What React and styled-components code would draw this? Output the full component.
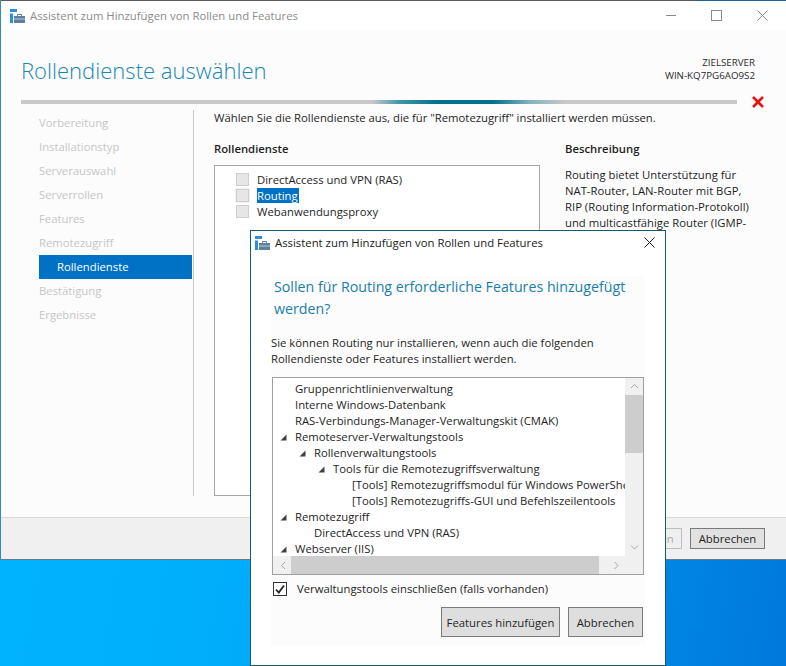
import React from "react";
import styled, { createGlobalStyle } from "styled-components";

const Global = createGlobalStyle`
  html, body { margin: 0; padding: 0; background: #00a8f8; }
  #root { width: 786px; height: 666px; overflow: hidden; }
  * { box-sizing: border-box; }
`;

const font = `"Open Sans", "Noto Sans", "Liberation Sans", sans-serif`;

const Screen = styled.div`
  position: relative;
  width: 786px;
  height: 666px;
  overflow: hidden;
  display: flex;
  flex-direction: column;
  font-family: ${font};
  font-size: 11.3px;
  color: #1e1e1e;
  background: linear-gradient(100deg, #00b6ff 0%, #00aefc 35%, #0094ec 70%, #0078dc 100%);
`;

const Wizard = styled.div`
  width: 786px;
  height: 560px;
  display: flex;
  flex-direction: column;
  background: #fff;
  border-style: solid;
  border-width: 0 0 1px 1px;
  border-color: #000 #000 #6a7a80 #2d8fb5;
`;

const TopEdge = styled.div`
  height: 1px;
  flex: none;
  background: linear-gradient(90deg, #5a5a5a 0, #5a5a5a 694px, #1f5f9e 694px, #1f5f9e 100%);
`;

const TitleBar = styled.div`
  height: 29px;
  flex: none;
  display: flex;
  align-items: center;
  padding-left: 9px;
  background: #fff;
`;

const TitleText = styled.span`
  margin-left: 5px;
  font-size: 11.35px;
  color: ${(p) => (p.$active ? "#1a1a1a" : "#8b8b8b")};
`;

const WinControls = styled.div`
  margin-left: auto;
  display: flex;
  align-items: center;
  padding-right: 18px;
  gap: 35px;
`;

const Body = styled.div`
  flex: 1;
  background: #fcfcfc;
  display: flex;
  flex-direction: column;
  padding-top: 24px;
`;

const Header = styled.div`
  height: 46px;
  display: flex;
  justify-content: space-between;
  padding: 0 31px 0 20px;
`;

const H1 = styled.h1`
  margin: 0;
  font-size: 22.05px;
  line-height: 32px;
  font-weight: 300;
  color: #1a86b4;
`;

const Target = styled.div`
  text-align: right;
  font-size: 9.75px;
  line-height: 13px;
  padding-top: 2px;
  color: #2a2a2a;
`;

const ProgressRow = styled.div`
  display: flex;
  align-items: center;
  height: 4px;
  padding-left: 20px;
`;

const Progress = styled.div`
  width: 716px;
  height: 4px;
  background: linear-gradient(
    90deg,
    #c8c8c8 0%,
    #c8c8c8 49%,
    #3f94a8 53%,
    #04728f 58%,
    #04728f 66%,
    #7fb3bf 71%,
    #c8c8c8 76%,
    #c8c8c8 100%
  );
`;

const ErrorMark = styled.svg`
  margin-left: 15px;
  flex: none;
`;

const Columns = styled.div`
  display: flex;
  padding-top: 6px;
  height: 392px;
`;

const Nav = styled.div`
  width: 193px;
  height: 386px;
  flex: none;
  border-right: 1px solid #c8c8c8;
  padding: 1px 1px 0 38px;
  display: flex;
  flex-direction: column;
`;

const NavItem = styled.div`
  height: 24px;
  line-height: 24px;
  font-size: 11.3px;
  padding-left: ${(p) => (p.$selected ? "18px" : "0")};
  background: ${(p) => (p.$selected ? "#0072c6" : "transparent")};
  color: ${(p) => (p.$selected ? "#fff" : "#c6c6c6")};
`;

const Main = styled.div`
  flex: 1;
  padding-left: 20px;
`;

const Intro = styled.div`
  line-height: 16px;
  height: 31px;
`;

const Panes = styled.div`
  display: flex;
  gap: 25px;
`;

const LeftPane = styled.div`
  width: 326px;
  flex: none;
`;

const PaneTitle = styled.div`
  font-weight: 600;
  line-height: 16px;
  height: ${(p) => (p.$tall ? "24px" : "18px")};
`;

const ServiceBox = styled.div`
  height: 331px;
  border: 1px solid #a6a6a6;
  background: #fff;
  padding: 5px 0 0 21px;
`;

const ServiceRow = styled.div`
  height: 16px;
  display: flex;
  align-items: center;
  gap: 8px;
`;

const Check = styled.span`
  width: 13px;
  height: 13px;
  flex: none;
  background: #e6e6e6;
  border: 1px solid #cfcfcf;
  box-shadow: ${(p) => (p.$hover ? "0 0 0 1px #f0f0f0" : "none")};
`;

const Label = styled.span`
  line-height: 15px;
  padding-right: ${(p) => (p.$selected ? "1px" : "0")};
  background: ${(p) => (p.$selected ? "#0072c6" : "transparent")};
  color: ${(p) => (p.$selected ? "#fff" : "inherit")};
`;

const DescText = styled.p`
  margin: 8px 0 0;
  line-height: 16px;
  white-space: nowrap;
`;

const Footer = styled.div`
  height: 42px;
  margin-top: auto;
  flex: none;
  background: #f0f0f0;
  border-top: 1px solid #d9d9d9;
  display: flex;
  justify-content: flex-end;
  align-items: flex-start;
  gap: 8px;
  padding: 10px 21px 0 0;
`;

const FooterBtn = styled.button`
  width: ${(p) => p.$w}px;
  height: 21px;
  padding: 0;
  font: inherit;
  color: ${(p) => (p.$disabled ? "#a8a8a8" : "#1e1e1e")};
  background: ${(p) => (p.$disabled ? "#efefef" : "#e1e1e1")};
  border: 1px solid ${(p) => (p.$disabled ? "#bdbdbd" : "#7a7a7a")};
`;

const Dialog = styled.div`
  position: absolute;
  left: 250px;
  top: 230px;
  width: 416px;
  height: 436px;
  background: #fff;
  border: 1px solid #155b6e;
  display: flex;
  flex-direction: column;
`;

const DialogTitle = styled.div`
  height: 23px;
  flex: none;
  display: flex;
  align-items: center;
  padding: 0 10px 0 4px;
`;

const DialogClose = styled.svg`
  margin-left: auto;
`;

const DialogPanel = styled.div`
  margin: 22px 20px 0 20px;
  height: 369px;
  background: #fcfcfc;
  display: flex;
  flex-direction: column;
`;

const Question = styled.h2`
  margin: 0;
  padding: 0 0 0 3px;
  font-size: 14.22px;
  line-height: 22px;
  font-weight: 400;
  color: #1a7ea8;
`;

const Explain = styled.div`
  margin-top: 15px;
  line-height: 16px;
  height: 42px;
`;

const ListBox = styled.div`
  margin-left: 1px;
  width: 372px;
  height: 198px;
  flex: none;
  border: 1px solid #a0a0a0;
  background: #fff;
  display: grid;
  grid-template-columns: 1fr 18px;
  grid-template-rows: 1fr 18px;
`;

const TreeView = styled.div`
  overflow: hidden;
  padding-top: 3px;
  white-space: nowrap;
`;

const TreeRow = styled.div`
  height: 16px;
  line-height: 16px;
  display: flex;
  align-items: center;
  padding-left: ${(p) => 3 + p.$level * 19}px;
`;

const Twisty = styled.span`
  width: 19px;
  flex: none;
  display: flex;
  align-items: center;
  padding-left: 4px;
`;

const VBar = styled.div`
  background: #f0f0f0;
  display: flex;
  flex-direction: column;
  justify-content: space-between;
  position: relative;
`;

const ArrowSlot = styled.div`
  height: 17px;
  display: flex;
  align-items: center;
  justify-content: center;
`;

const HBar = styled.div`
  grid-column: 1 / 3;
  background: #f0f0f0;
  position: relative;
  display: flex;
  align-items: center;
  justify-content: space-between;
  padding: 0 23px 0 7px;
`;

const VThumb = styled.div`
  position: absolute;
  left: 0;
  right: 0;
  top: 17px;
  height: 58px;
  background: #cdcdcd;
`;

const HThumb = styled.div`
  position: absolute;
  left: 18px;
  top: 0;
  bottom: 0;
  width: 308px;
  background: #cdcdcd;
`;

const IncludeRow = styled.div`
  margin-top: 6px;
  margin-left: 2px;
  height: 15px;
  display: flex;
  align-items: center;
  gap: 10px;
`;

const CheckedBox = styled.span`
  width: 14px;
  height: 14px;
  flex: none;
  background: #fff;
  border: 1px solid #333;
  display: flex;
  align-items: center;
  justify-content: center;
`;

const DialogActions = styled.div`
  display: flex;
  justify-content: flex-end;
  gap: 8px;
  margin-top: 11px;
  padding-right: 2px;
`;

const DialogBtn = styled.button`
  width: ${(p) => p.$w}px;
  height: 30px;
  padding: 0;
  font: inherit;
  color: #1e1e1e;
  background: #dedede;
  border: 1px solid #7a7a7a;
`;

const Desktop = styled.div`
  flex: 1;
`;

const AppIcon = () => (
  <svg width="15" height="14" viewBox="0 0 15 14">
    <rect x="0" y="0" width="7" height="3" fill="#2b90dc" />
    <rect x="0" y="4.5" width="3" height="9.5" fill="#2b90dc" />
    <rect x="4" y="7" width="11" height="7" fill="#5f7f9f" />
    <rect x="4" y="9.5" width="11" height="1" fill="#b5c6d6" />
    <path d="M7.5 7V5.5h4V7" fill="none" stroke="#5f7f9f" strokeWidth="1" />
  </svg>
);

const Tri = () => (
  <svg width="7" height="7" viewBox="0 0 7 7">
    <path d="M6.5 0.5V6.5H0.5Z" fill="#404040" />
  </svg>
);

const Chevron = ({ d }) => {
  const paths = {
    up: "M1 5L4.5 1.5L8 5",
    down: "M1 1.5L4.5 5L8 1.5",
  };
  const h = {
    left: "M5 1L1.5 4.5L5 8",
    right: "M1.5 1L5 4.5L1.5 8",
  };
  if (paths[d]) {
    return (
      <svg width="9" height="7" viewBox="0 0 9 7">
        <path d={paths[d]} fill="none" stroke="#a6a6a6" strokeWidth="1" />
      </svg>
    );
  }
  return (
    <svg width="7" height="9" viewBox="0 0 7 9">
      <path d={h[d]} fill="none" stroke="#a6a6a6" strokeWidth="1" />
    </svg>
  );
};

const CrossIcon = ({ c, size = 11 }) => (
  <svg width={size} height={size} viewBox="0 0 11 11">
    <path d="M0.5 0.5L10.5 10.5M10.5 0.5L0.5 10.5" stroke={c} strokeWidth="1" fill="none" />
  </svg>
);

const tree = [
  [0, false, "Gruppenrichtlinienverwaltung"],
  [0, false, "Interne Windows-Datenbank"],
  [0, false, "RAS-Verbindungs-Manager-Verwaltungskit (CMAK)"],
  [0, true, "Remoteserver-Verwaltungstools"],
  [1, true, "Rollenverwaltungstools"],
  [2, true, "Tools für die Remotezugriffsverwaltung"],
  [3, false, "[Tools] Remotezugriffsmodul für Windows PowerShell"],
  [3, false, "[Tools] Remotezugriffs-GUI und Befehlszeilentools"],
  [0, true, "Remotezugriff"],
  [1, false, "DirectAccess und VPN (RAS)"],
  [0, true, "Webserver (IIS)"],
];

const steps = [
  "Vorbereitung",
  "Installationstyp",
  "Serverauswahl",
  "Serverrollen",
  "Features",
  "Remotezugriff",
  "Rollendienste",
  "Bestätigung",
  "Ergebnisse",
];

export default function App() {
  return (
    <Screen>
      <Global />
      <Wizard>
        <TopEdge />
        <TitleBar>
          <AppIcon />
          <TitleText>Assistent zum Hinzufügen von Rollen und Features</TitleText>
          <WinControls>
            <svg width="10" height="1" viewBox="0 0 10 1"><rect width="10" height="1" fill="#8a8a8a" /></svg>
            <svg width="11" height="11" viewBox="0 0 11 11"><rect x="0.5" y="0.5" width="10" height="10" fill="none" stroke="#8a8a8a" /></svg>
            <CrossIcon c="#8a8a8a" />
          </WinControls>
        </TitleBar>
        <Body>
          <Header>
            <H1>Rollendienste auswählen</H1>
            <Target>
              <div>ZIELSERVER</div>
              <div>WIN-KQ7PG6AO9S2</div>
            </Target>
          </Header>
          <ProgressRow>
            <Progress />
            <ErrorMark width="12" height="12" viewBox="0 0 12 12">
              <path d="M1 1L11 11M11 1L1 11" stroke="#e81010" strokeWidth="2.6" fill="none" />
            </ErrorMark>
          </ProgressRow>
          <Columns>
            <Nav>
              {steps.map((s) => (
                <NavItem key={s} $selected={s === "Rollendienste"}>{s}</NavItem>
              ))}
            </Nav>
            <Main>
              <Intro>Wählen Sie die Rollendienste aus, die für "Remotezugriff" installiert werden müssen.</Intro>
              <Panes>
                <LeftPane>
                  <PaneTitle $tall>Rollendienste</PaneTitle>
                  <ServiceBox>
                    <ServiceRow><Check /><Label>DirectAccess und VPN (RAS)</Label></ServiceRow>
                    <ServiceRow><Check $hover /><Label $selected>Routing</Label></ServiceRow>
                    <ServiceRow><Check /><Label>Webanwendungsproxy</Label></ServiceRow>
                  </ServiceBox>
                </LeftPane>
                <div>
                  <PaneTitle>Beschreibung</PaneTitle>
                  <DescText>
                    Routing bietet Unterstützung für<br />
                    NAT-Router, LAN-Router mit BGP,<br />
                    RIP (Routing Information-Protokoll)<br />
                    und multicastfähige Router (IGMP-
                  </DescText>
                </div>
              </Panes>
            </Main>
          </Columns>
          <Footer>
            <FooterBtn $w={75} $disabled>Installieren</FooterBtn>
            <FooterBtn $w={75}>Abbrechen</FooterBtn>
          </Footer>
        </Body>
      </Wizard>
      <Desktop />
      <Dialog>
        <DialogTitle>
          <AppIcon />
          <TitleText $active>Assistent zum Hinzufügen von Rollen und Features</TitleText>
          <DialogClose width="11" height="11" viewBox="0 0 11 11">
            <path d="M0.5 0.5L10.5 10.5M10.5 0.5L0.5 10.5" stroke="#1a1a1a" strokeWidth="1" fill="none" />
          </DialogClose>
        </DialogTitle>
        <DialogPanel>
          <Question>Sollen für Routing erforderliche Features hinzugefügt<br />werden?</Question>
          <Explain>
            Sie können Routing nur installieren, wenn auch die folgenden<br />
            Rollendienste oder Features installiert werden.
          </Explain>
          <ListBox>
            <TreeView>
              {tree.map(([level, open, text]) => (
                <TreeRow key={text} $level={level}>
                  <Twisty>{open && <Tri />}</Twisty>
                  {text}
                </TreeRow>
              ))}
            </TreeView>
            <VBar>
              <VThumb />
              <ArrowSlot><Chevron d="up" /></ArrowSlot>
              <ArrowSlot><Chevron d="down" /></ArrowSlot>
            </VBar>
            <HBar>
              <HThumb />
              <Chevron d="left" />
              <Chevron d="right" />
            </HBar>
          </ListBox>
          <IncludeRow>
            <CheckedBox>
              <svg width="10" height="10" viewBox="0 0 10 10">
                <path d="M1 5.5L3.8 8.5L9 1.5" fill="none" stroke="#222" strokeWidth="1.8" />
              </svg>
            </CheckedBox>
            <span>Verwaltungstools einschließen (falls vorhanden)</span>
          </IncludeRow>
          <DialogActions>
            <DialogBtn $w={119}>Features hinzufügen</DialogBtn>
            <DialogBtn $w={75}>Abbrechen</DialogBtn>
          </DialogActions>
        </DialogPanel>
      </Dialog>
    </Screen>
  );
}
